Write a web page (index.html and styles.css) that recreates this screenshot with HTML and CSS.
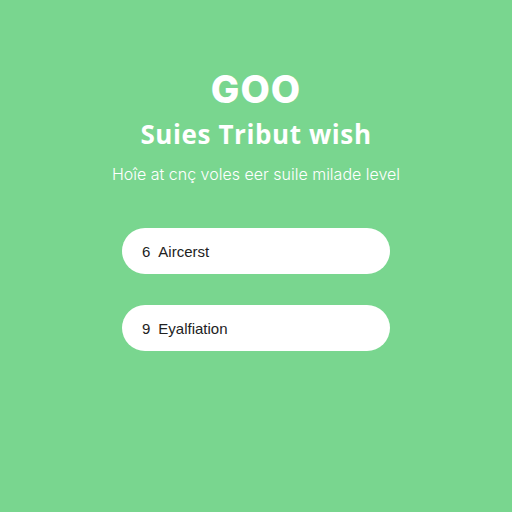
FILE: index.html
```html
<!DOCTYPE html>
<html lang="en">
<head>
<meta charset="utf-8">
<title>GOO</title>
<link rel="stylesheet" href="styles.css">
</head>
<body>
<main class="screen">
  <header class="intro">
    <h1 class="logo">GOO</h1>
    <h2 class="title">Suies Tribut wish</h2>
    <p class="subtitle">Hoîe at cnç voles eer suile milade level</p>
  </header>
  <ul class="options">
    <li class="option"><span class="num">6</span><span class="label">Aircerst</span></li>
    <li class="option"><span class="num">9</span><span class="label">Eyalfiation</span></li>
  </ul>
</main>
</body>
</html>
```

FILE: styles.css
```css
html, body {
  margin: 0;
  padding: 0;
}

body {
  width: 512px;
  height: 512px;
  background: #79d68f;
  font-family: "Inter", "Liberation Sans", sans-serif;
  color: #fff;
  overflow: hidden;
}

.screen {
  display: flex;
  flex-direction: column;
  align-items: center;
  padding-top: 66px;
}

.intro {
  display: flex;
  flex-direction: column;
  align-items: center;
  text-align: center;
}

.logo {
  margin: 0;
  font-size: 38px;
  font-weight: 800;
  line-height: 46px;
  letter-spacing: 1px;
}

.title {
  margin: 6px 0 0;
  font-family: "Open Sans", "Inter", sans-serif;
  font-size: 26px;
  font-weight: 700;
  line-height: 32px;
  letter-spacing: 0.6px;
}

.subtitle {
  margin: 14px 0 0;
  font-size: 16px;
  font-weight: 300;
  line-height: 20px;
}

.options {
  list-style: none;
  margin: 44px 0 0;
  padding: 0;
  display: flex;
  flex-direction: column;
  gap: 31px;
}

.option {
  width: 268px;
  height: 46px;
  box-sizing: border-box;
  background: #fff;
  border-radius: 23px;
  display: flex;
  align-items: center;
  gap: 8px;
  padding-left: 20px;
  color: #222;
  font-family: "Liberation Sans", sans-serif;
  font-size: 15px;
}
```
